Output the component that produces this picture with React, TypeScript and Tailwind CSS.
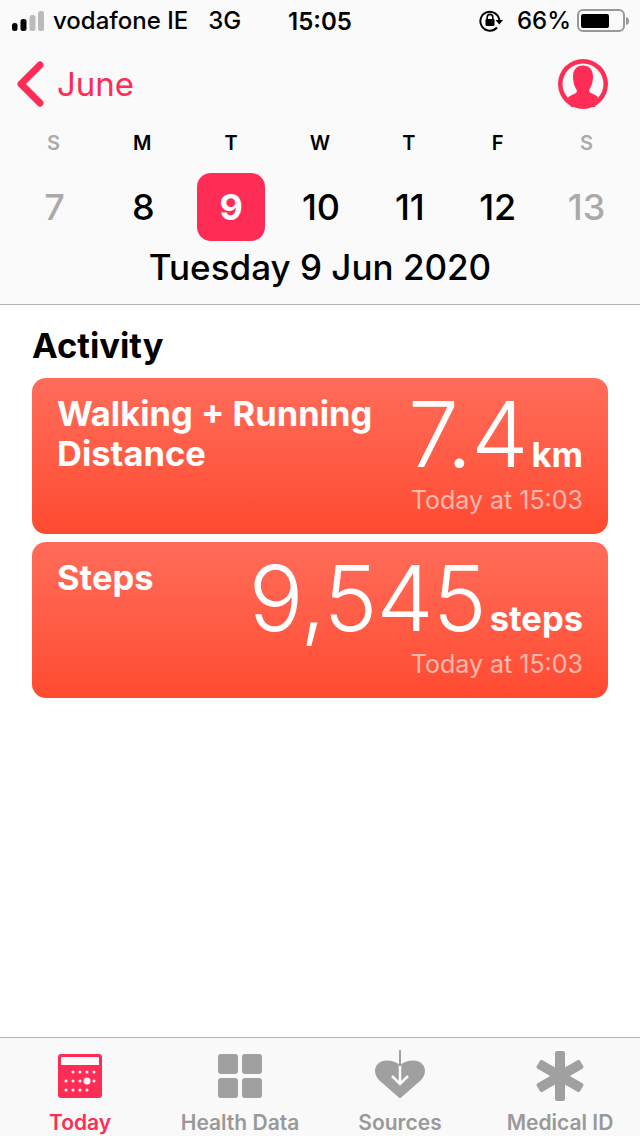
import React from "react";

const INTER = "font-['Inter','Liberation_Sans',sans-serif]";

function SignalBars() {
  return (
    <svg width="36" height="20" viewBox="0 0 36 20">
      <rect x="0" y="12" width="5.500" height="8" rx="2.500" fill="#000" />
      <rect x="8.500" y="8" width="6" height="12" rx="2.500" fill="#000" />
      <rect x="17.500" y="4" width="6" height="16" rx="2.500" fill="#bbb" />
      <rect x="26" y="0" width="6" height="20" rx="2.500" fill="#bbb" />
    </svg>
  );
}

function OrientationLock() {
  return (
    <svg width="24" height="22" viewBox="0 0 24 22">
      <path d="M18 17.5A9.5 9.5 0 1 1 20.3 10" fill="none" stroke="#000" strokeWidth="2" />
      <path d="M16.5 10h7.5l-3.7 4.6z" fill="#000" />
      <rect x="6.5" y="9" width="9" height="7" rx="1" fill="#000" />
      <path d="M8.2 9V7.2a2.8 2.8 0 0 1 5.6 0V9" fill="none" stroke="#000" strokeWidth="1.6" />
    </svg>
  );
}

function Battery() {
  return (
    <div className="flex items-center">
      <div className="flex h-[23px] w-[48px] items-center rounded-[6px] border-2 border-[#999] p-[2px]">
        <div className="h-[14px] w-[28px] rounded-[2px] bg-black" />
      </div>
      <svg width="3" height="8" viewBox="0 0 3 8" className="ml-[1px]">
        <path d="M0 0a4 4 0 0 1 3 4 4 4 0 0 1-3 4z" fill="#999" />
      </svg>
    </div>
  );
}

function ProfileIcon() {
  return (
    <svg width="50" height="50" viewBox="0 0 50 50">
      <circle cx="25" cy="25" r="25" fill="#ff2d55" />
      <circle cx="25" cy="25" r="20.5" fill="#fafafa" />
      <path
        d="M25 6.500c6.500 0 10 4.500 10 11 0 4.500-1 9-3.400 12.500-.8 1.200-.6 3 .8 3.800 3 1.700 5.600 2.400 7.600 4.200L37 48H13l-3-9.500c2-1.800 4.600-2.500 7.600-4.200 1.400-.8 1.600-2.600.8-3.800C16 26.500 15 22 15 17.500c0-6.500 3.500-11 10-11z"
        fill="#ff2d55"
      />
    </svg>
  );
}

function TodayIcon() {
  const dots: [number, number][] = [
    [15, 18], [22, 18], [29, 18], [36, 18],
    [8, 27], [15, 27], [22, 27], [36, 27],
    [8, 36], [15, 36], [22, 36], [29, 36],
  ];
  return (
    <svg width="44" height="44" viewBox="0 0 44 44">
      <rect width="44" height="44" rx="3" fill="#ff2d55" />
      <rect x="3" y="3" width="38" height="8" fill="#fafafa" />
      {dots.map(([cx, cy]) => (
        <circle key={`${cx}-${cy}`} cx={cx} cy={cy} r="1.500" fill="#fafafa" />
      ))}
      <circle cx="29" cy="27" r="3.500" fill="#fafafa" />
    </svg>
  );
}

function HealthDataIcon() {
  return (
    <svg width="44" height="44" viewBox="0 0 44 44" fill="#a0a0a0">
      <rect width="20" height="20" rx="3" />
      <rect x="24" width="20" height="20" rx="3" />
      <rect y="24" width="20" height="20" rx="3" />
      <rect x="24" y="24" width="20" height="20" rx="3" />
    </svg>
  );
}

function SourcesIcon() {
  return (
    <svg width="50" height="52" viewBox="0 0 50 52">
      <path
        d="M25 48.500 5 31C1.500 27.500 0 24.500 0 21 0 15 5 10.500 11.500 10.500 17 10.500 22 12.500 25 15c3-2.500 8-4.500 13.500-4.500C45 10.500 50 15 50 21c0 3.500-1.500 6.500-5 10z"
        fill="#a0a0a0"
      />
      <path d="M25 15v19" stroke="#fafafa" strokeWidth="2.500" />
      <path d="M25 0v16" stroke="#a0a0a0" strokeWidth="2" />
      <path d="M17 26l8 8 8-8" fill="none" stroke="#fafafa" strokeWidth="2.500" />
    </svg>
  );
}

function MedicalIcon() {
  return (
    <svg width="48" height="50" viewBox="0 0 48 50" fill="#a0a0a0">
      <rect x="19" y="0" width="10" height="50" rx="2" />
      <rect x="19" y="0" width="10" height="50" rx="2" transform="rotate(60 24 25)" />
      <rect x="19" y="0" width="10" height="50" rx="2" transform="rotate(-60 24 25)" />
    </svg>
  );
}

function StatusBar() {
  return (
    <div className="relative flex h-[40px] items-center justify-between pl-[12px] pr-[11px] pt-[1px] text-[24px] text-black">
      <div className="flex items-center">
        <SignalBars />
        <span className="ml-[5px] font-medium">vodafone IE</span>
        <span className="ml-[20px] font-medium">3G</span>
      </div>
      <span className="absolute left-[288px] top-[4px] font-semibold">15:05</span>
      <div className="flex items-center">
        <OrientationLock />
        <span className="ml-[14px] mr-[6px] font-medium">66%</span>
        <Battery />
      </div>
    </div>
  );
}

const week = [
  { letter: "S", date: "7", tone: "pl-[2px] font-medium text-[#aaa]" },
  { letter: "M", date: "8", tone: "pl-[2px] font-medium text-black" },
  { letter: "T", date: "9", tone: "bg-[#ff2d55] font-bold text-white" },
  { letter: "W", date: "10", tone: "pl-[2px] font-medium text-black" },
  { letter: "T", date: "11", tone: "pl-[2px] font-medium text-black" },
  { letter: "F", date: "12", tone: "font-medium text-black" },
  { letter: "S", date: "13", tone: "font-medium text-[#aaa]" },
];

function Header() {
  return (
    <header className="border-b border-[#b2b2b2] bg-[#fafafa]">
      <StatusBar />
      <div className="flex h-[69px] items-center justify-between pl-[16px] pr-[32px] pt-[19px]">
        <div className="flex items-center">
          <svg width="28" height="46" viewBox="0 0 28 46" fill="none">
            <path d="M24 4 5 23l19 19" stroke="#ff2d55" strokeWidth="7" strokeLinecap="round" strokeLinejoin="round" />
          </svg>
          <span className="ml-[13px] text-[33px] leading-none text-[#ff2d55]">June</span>
        </div>
        <ProfileIcon />
      </div>
      <div className="grid grid-cols-7 px-[9px] pt-[22px]">
        {week.map((d, i) => (
          <div key={i} className="flex flex-col items-center">
            <span className={`h-[24px] text-[20px] font-semibold leading-[24px] ${i === 0 || i === 6 ? "text-[#aaa]" : "text-black"}`}>
              {d.letter}
            </span>
            <div className={`mt-[18px] flex h-[68px] w-[68px] items-center justify-center rounded-[14px] text-[36px] ${d.tone}`}>
              {d.date}
            </div>
          </div>
        ))}
      </div>
      <div className="pb-[15px] pt-[4px] text-center text-[35px] font-medium leading-[44px] text-black">Tuesday 9 Jun 2020</div>
    </header>
  );
}

function MetricCard(props: { title: React.ReactNode; value: string; unit: string }) {
  return (
    <div className="flex h-[156px] justify-between rounded-[14px] bg-gradient-to-b from-[#ff6c59] to-[#ff4a30] pl-[25px] pr-[25px] text-white">
      <div className="pt-[16px] text-[34.500px] font-bold leading-[40px]">{props.title}</div>
      <div className="flex flex-col items-end">
        <div className="flex h-[96px] items-baseline">
          <span className="text-[91px] font-[350] leading-[112px] tracking-[-1px]">{props.value}</span>
          <span className="ml-[4px] text-[34.500px] font-bold">{props.unit}</span>
        </div>
        <span className="mt-[12px] text-[25px] leading-[28px] text-white/60">Today at 15:03</span>
      </div>
    </div>
  );
}

function Activity() {
  return (
    <main className="flex-1 bg-white px-[32px]">
      <h2 className="pb-[12px] pt-[21px] text-[34.500px] font-bold leading-[40px] text-black">Activity</h2>
      <div className="flex flex-col gap-[8px]">
        <MetricCard title={<>Walking + Running<br />Distance</>} value="7.4" unit="km" />
        <MetricCard title="Steps" value="9,545" unit="steps" />
      </div>
    </main>
  );
}

const tabs = [
  { label: "Today", icon: <TodayIcon />, active: true },
  { label: "Health Data", icon: <HealthDataIcon /> },
  { label: "Sources", icon: <SourcesIcon /> },
  { label: "Medical ID", icon: <MedicalIcon /> },
];

function TabBar() {
  return (
    <nav className="grid h-[99px] grid-cols-4 border-t border-[#b2b2b2] bg-[#f9f9f9]">
      {tabs.map((t) => (
        <div key={t.label} className="flex flex-col items-center">
          <div className="flex h-[73px] items-center pt-[3px]">{t.icon}</div>
          <span className={`text-[21px] font-semibold leading-[24px] ${t.active ? "text-[#ff2d55]" : "text-[#999]"}`}>
            {t.label}
          </span>
        </div>
      ))}
    </nav>
  );
}

export default function App() {
  return (
    <div className={`flex h-[1136px] w-[640px] flex-col overflow-hidden bg-white ${INTER}`}>
      <Header />
      <Activity />
      <TabBar />
    </div>
  );
}
